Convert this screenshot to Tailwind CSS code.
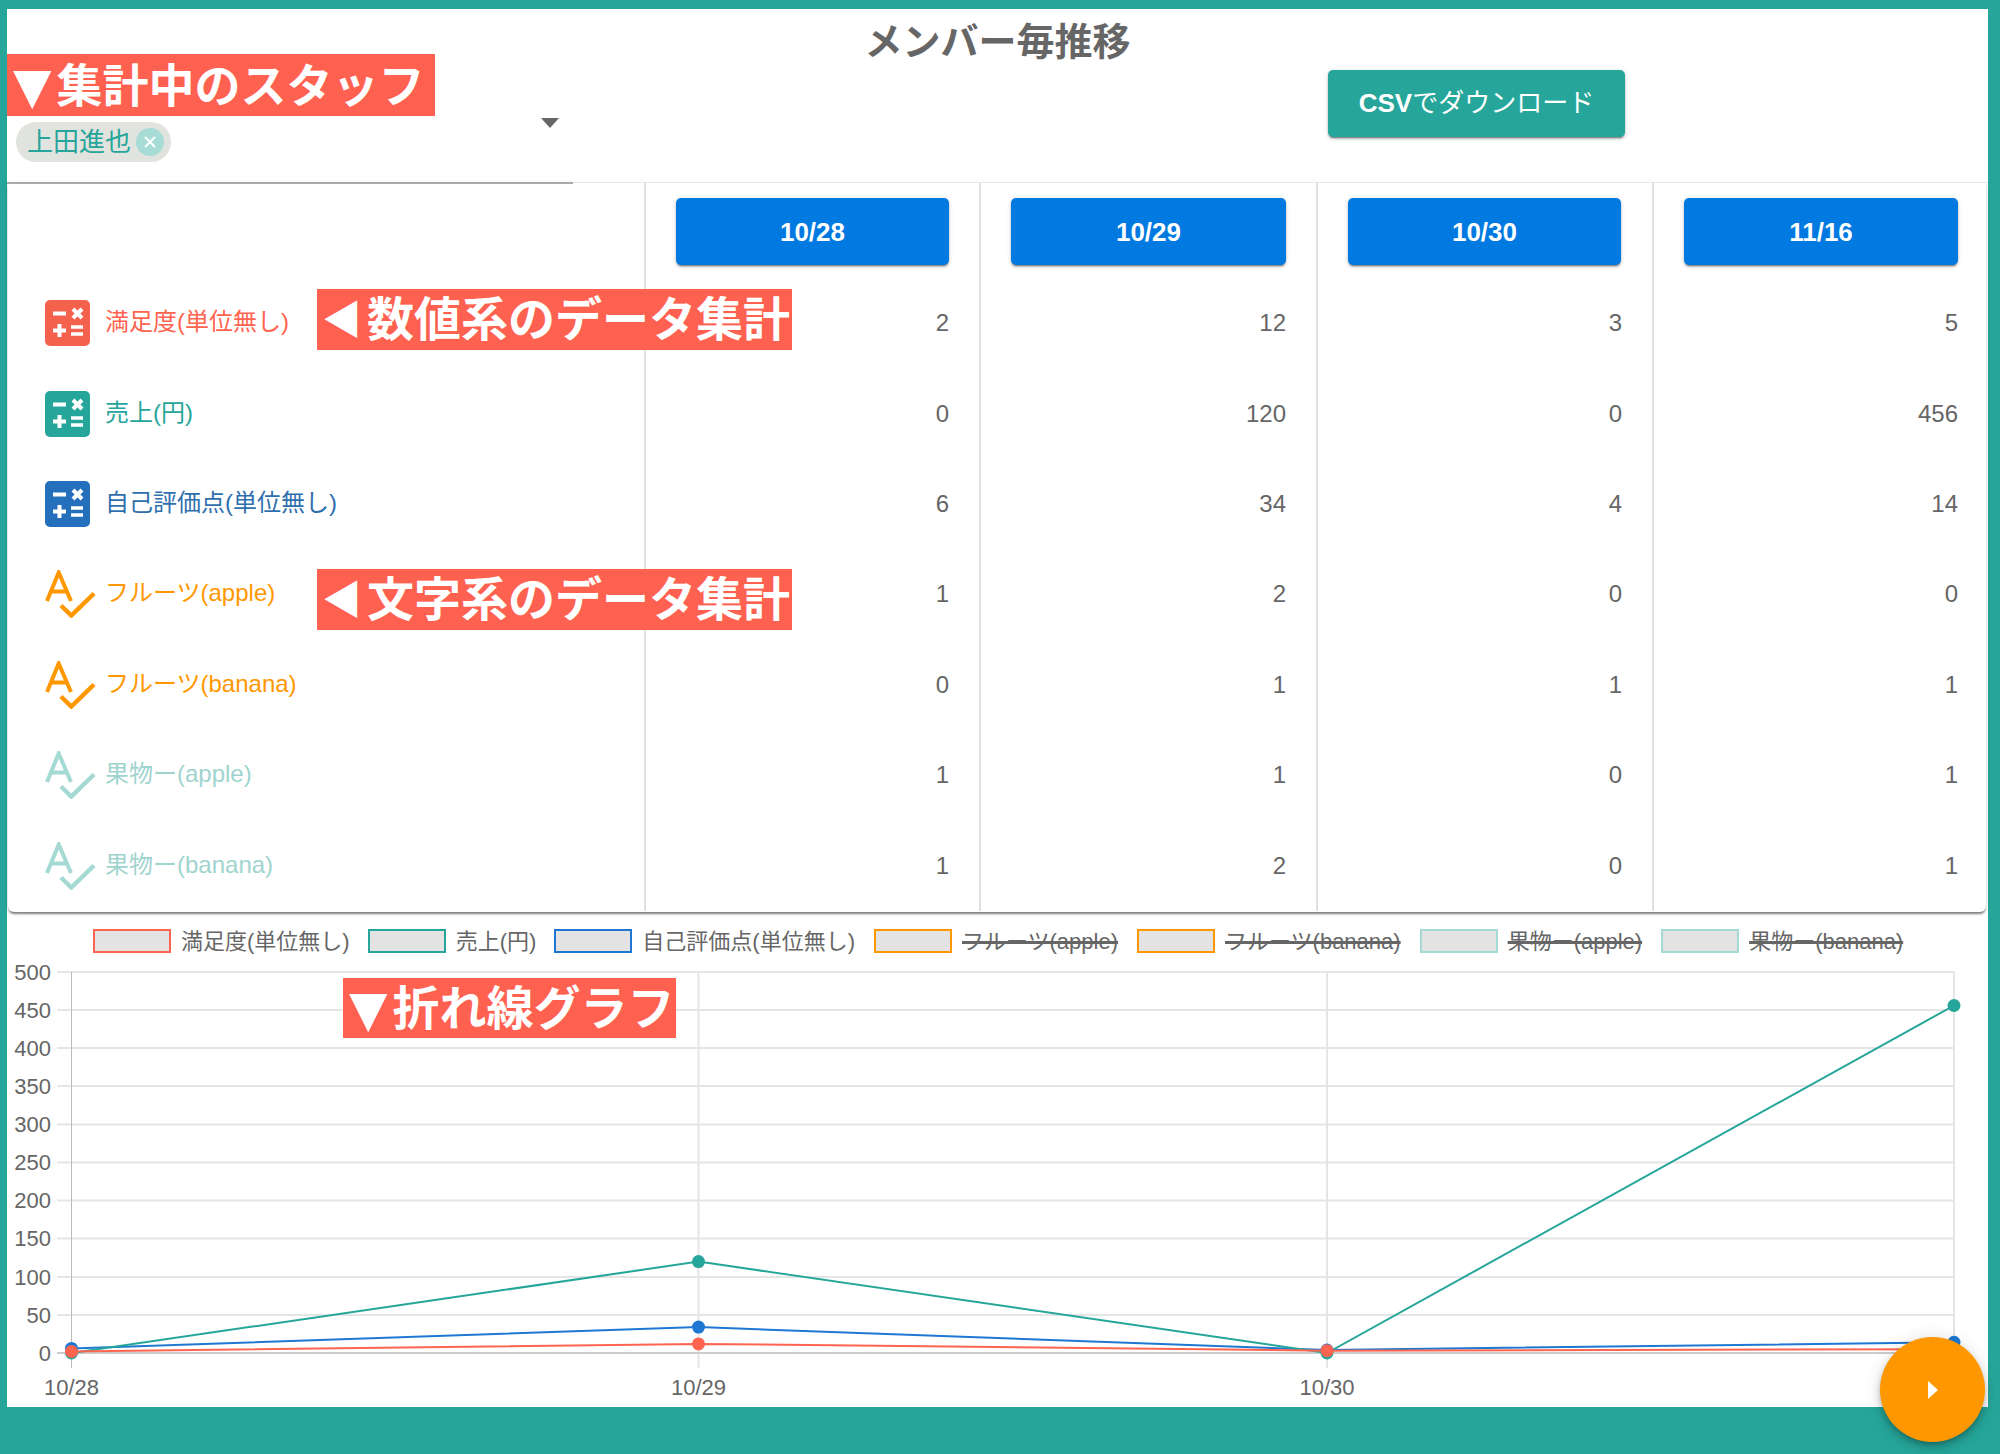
<!DOCTYPE html>
<html lang="ja">
  <head>
    <meta charset="utf-8" />
    <title>メンバー毎推移</title>
    <script src="https://cdn.jsdelivr.net/npm/@tailwindcss/browser@4"></script>
  </head>
  <body class="bg-[#26a69a] font-['Liberation_Sans','Noto_Sans_CJK_JP',sans-serif] text-[#666]">
    <div class="relative w-[2000px] h-[1454px] overflow-hidden pt-[9px] pl-[7px] pr-[12px]">
      <div class="bg-white h-[1398px]">
        <!-- header -->
        <header class="relative h-[174px]">
          <h1 class="absolute left-0 right-0 top-[10px] text-center text-[38px] leading-[46px] font-bold text-[#666]">メンバー毎推移</h1>
          <div class="absolute left-0 top-0 w-[566px] h-[175px] border-b-2 border-[#aaa]">
            <span class="absolute left-[9px] top-[113px] flex items-center h-[40px] w-[155px] pl-[11px] rounded-full bg-[#e1e3df] text-[26px] text-[#26a69a]">
              上田進也
              <svg class="ml-[5px]" width="28" height="28" viewBox="0 0 28 28">
                <circle cx="14" cy="14" r="14" fill="#a8dcd6" />
                <path d="M9 9l10 10M19 9L9 19" stroke="#fff" stroke-width="2" />
              </svg>
            </span>
            <svg class="absolute left-[534px] top-[109px]" width="18" height="10" viewBox="0 0 18 10"><path d="M0 0h18L9 10z" fill="#666" /></svg>
          </div>
          <div class="absolute left-[566px] right-0 bottom-0 border-b border-[#e8e8e8]"></div>
          <button class="absolute left-[1321px] top-[61px] w-[297px] h-[67px] rounded-[5px] bg-[#26a69a] text-white text-[26px] shadow-[0_3px_1px_-2px_rgba(0,0,0,0.3),0_2px_2px_0_rgba(0,0,0,0.2),0_1px_5px_0_rgba(0,0,0,0.15)]"><span class="font-bold">CSV</span>でダウンロード</button>
        </header>

        <!-- table -->
        <section class="grid grid-cols-[636px_335px_337px_336px_334px] grid-rows-[95px_repeat(7,90.4px)] w-[1978px] h-[729px] ml-[1px] -mr-[1px] rounded-b-[6px] text-[24px] shadow-[0_3px_2px_-1px_rgba(0,0,0,0.35),0_2px_2px_0_rgba(0,0,0,0.14),0_1px_5px_0_rgba(0,0,0,0.12)]">
          <div></div>
          <div class="border-l-2 border-[#e0e0e0] pl-[30px] pt-[15px]"><button class="w-[273px] h-[67px] pt-[1px] rounded-[5px] bg-[#0079e1] text-white text-[26px] font-bold shadow-[0_3px_1px_-2px_rgba(0,0,0,0.3),0_2px_2px_0_rgba(0,0,0,0.2),0_1px_5px_0_rgba(0,0,0,0.15)]">10/28</button></div>
          <div class="border-l-2 border-[#e0e0e0] pl-[30px] pt-[15px]"><button class="w-[275px] h-[67px] pt-[1px] rounded-[5px] bg-[#0079e1] text-white text-[26px] font-bold shadow-[0_3px_1px_-2px_rgba(0,0,0,0.3),0_2px_2px_0_rgba(0,0,0,0.2),0_1px_5px_0_rgba(0,0,0,0.15)]">10/29</button></div>
          <div class="border-l-2 border-[#e0e0e0] pl-[30px] pt-[15px]"><button class="w-[273px] h-[67px] pt-[1px] rounded-[5px] bg-[#0079e1] text-white text-[26px] font-bold shadow-[0_3px_1px_-2px_rgba(0,0,0,0.3),0_2px_2px_0_rgba(0,0,0,0.2),0_1px_5px_0_rgba(0,0,0,0.15)]">10/30</button></div>
          <div class="border-l-2 border-[#e0e0e0] pl-[30px] pt-[15px]"><button class="w-[274px] h-[67px] pt-[1px] rounded-[5px] bg-[#0079e1] text-white text-[26px] font-bold shadow-[0_3px_1px_-2px_rgba(0,0,0,0.3),0_2px_2px_0_rgba(0,0,0,0.2),0_1px_5px_0_rgba(0,0,0,0.15)]">11/16</button></div>

          <!-- numeric rows -->
          <div class="flex items-center pl-[37px] gap-[15px] text-[#ff6450]">
            <svg width="45" height="46" viewBox="0 0 45 46"><rect width="45" height="46" rx="5" fill="#f4614c" /><path d="M8 13.5h13M28 9l9 9M37 9l-9 9M14.5 24v13M8 30.5h13" stroke="#fff" stroke-width="4" /><path d="M26 27h12M26 34h12" stroke="#fff" stroke-width="3.5" /></svg>
            <span class="-mt-[2px]">満足度(単位無し)</span>
          </div>
          <div class="flex items-center justify-end pr-[30px] border-l-2 border-[#e0e0e0]">2</div>
          <div class="flex items-center justify-end pr-[30px] border-l-2 border-[#e0e0e0]">12</div>
          <div class="flex items-center justify-end pr-[30px] border-l-2 border-[#e0e0e0]">3</div>
          <div class="flex items-center justify-end pr-[28px] border-l-2 border-[#e0e0e0]">5</div>

          <div class="flex items-center pl-[37px] gap-[15px] text-[#26a69a]">
            <svg width="45" height="46" viewBox="0 0 45 46"><rect width="45" height="46" rx="5" fill="#26a69a" /><path d="M8 13.5h13M28 9l9 9M37 9l-9 9M14.5 24v13M8 30.5h13" stroke="#fff" stroke-width="4" /><path d="M26 27h12M26 34h12" stroke="#fff" stroke-width="3.5" /></svg>
            <span class="-mt-[2px]">売上(円)</span>
          </div>
          <div class="flex items-center justify-end pr-[30px] border-l-2 border-[#e0e0e0]">0</div>
          <div class="flex items-center justify-end pr-[30px] border-l-2 border-[#e0e0e0]">120</div>
          <div class="flex items-center justify-end pr-[30px] border-l-2 border-[#e0e0e0]">0</div>
          <div class="flex items-center justify-end pr-[28px] border-l-2 border-[#e0e0e0]">456</div>

          <div class="flex items-center pl-[37px] gap-[15px] text-[#2f6fae]">
            <svg width="45" height="46" viewBox="0 0 45 46"><rect width="45" height="46" rx="5" fill="#2470bd" /><path d="M8 13.5h13M28 9l9 9M37 9l-9 9M14.5 24v13M8 30.5h13" stroke="#fff" stroke-width="4" /><path d="M26 27h12M26 34h12" stroke="#fff" stroke-width="3.5" /></svg>
            <span class="-mt-[2px]">自己評価点(単位無し)</span>
          </div>
          <div class="flex items-center justify-end pr-[30px] border-l-2 border-[#e0e0e0]">6</div>
          <div class="flex items-center justify-end pr-[30px] border-l-2 border-[#e0e0e0]">34</div>
          <div class="flex items-center justify-end pr-[30px] border-l-2 border-[#e0e0e0]">4</div>
          <div class="flex items-center justify-end pr-[28px] border-l-2 border-[#e0e0e0]">14</div>

          <!-- text rows -->
          <div class="flex items-center pl-[36px] gap-[9px] text-[#ff9800]">
            <svg width="52" height="48" viewBox="0 0 52 48" fill="none" stroke="#ff9800"><path d="M3 31L14.7 2.5L27 31M7 21.5H23" stroke-width="4" /><path d="M17 35.5L27.3 45.5L50 23.5" stroke-width="4.5" /></svg>
            <span class="-mt-[2px]">フルーツ(apple)</span>
          </div>
          <div class="flex items-center justify-end pr-[30px] border-l-2 border-[#e0e0e0]">1</div>
          <div class="flex items-center justify-end pr-[30px] border-l-2 border-[#e0e0e0]">2</div>
          <div class="flex items-center justify-end pr-[30px] border-l-2 border-[#e0e0e0]">0</div>
          <div class="flex items-center justify-end pr-[28px] border-l-2 border-[#e0e0e0]">0</div>

          <div class="flex items-center pl-[36px] gap-[9px] text-[#ff9800]">
            <svg width="52" height="48" viewBox="0 0 52 48" fill="none" stroke="#ff9800"><path d="M3 31L14.7 2.5L27 31M7 21.5H23" stroke-width="4" /><path d="M17 35.5L27.3 45.5L50 23.5" stroke-width="4.5" /></svg>
            <span class="-mt-[2px]">フルーツ(banana)</span>
          </div>
          <div class="flex items-center justify-end pr-[30px] border-l-2 border-[#e0e0e0]">0</div>
          <div class="flex items-center justify-end pr-[30px] border-l-2 border-[#e0e0e0]">1</div>
          <div class="flex items-center justify-end pr-[30px] border-l-2 border-[#e0e0e0]">1</div>
          <div class="flex items-center justify-end pr-[28px] border-l-2 border-[#e0e0e0]">1</div>

          <div class="flex items-center pl-[36px] gap-[9px] text-[#9fd4ce]">
            <svg width="52" height="48" viewBox="0 0 52 48" fill="none" stroke="#a5dad4"><path d="M3 31L14.7 2.5L27 31M7 21.5H23" stroke-width="4" /><path d="M17 35.5L27.3 45.5L50 23.5" stroke-width="4.5" /></svg>
            <span class="-mt-[2px]">果物ー(apple)</span>
          </div>
          <div class="flex items-center justify-end pr-[30px] border-l-2 border-[#e0e0e0]">1</div>
          <div class="flex items-center justify-end pr-[30px] border-l-2 border-[#e0e0e0]">1</div>
          <div class="flex items-center justify-end pr-[30px] border-l-2 border-[#e0e0e0]">0</div>
          <div class="flex items-center justify-end pr-[28px] border-l-2 border-[#e0e0e0]">1</div>

          <div class="flex items-center pl-[36px] gap-[9px] text-[#9fd4ce]">
            <svg width="52" height="48" viewBox="0 0 52 48" fill="none" stroke="#a5dad4"><path d="M3 31L14.7 2.5L27 31M7 21.5H23" stroke-width="4" /><path d="M17 35.5L27.3 45.5L50 23.5" stroke-width="4.5" /></svg>
            <span class="-mt-[2px]">果物ー(banana)</span>
          </div>
          <div class="flex items-center justify-end pr-[30px] border-l-2 border-[#e0e0e0]">1</div>
          <div class="flex items-center justify-end pr-[30px] border-l-2 border-[#e0e0e0]">2</div>
          <div class="flex items-center justify-end pr-[30px] border-l-2 border-[#e0e0e0]">0</div>
          <div class="flex items-center justify-end pr-[28px] border-l-2 border-[#e0e0e0]">1</div>
        </section>

        <!-- legend -->
        <div class="flex items-center h-[48px] pt-[17px] pb-[7px] pl-[86px] text-[22px] text-[#666]">
          <span class="w-[78px] h-[24px] bg-[#e3e3e3] border-2 border-[#ff6450]"></span>
          <span class="ml-[10px] mr-[18px]">満足度(単位無し)</span>
          <span class="w-[78px] h-[24px] bg-[#e3e3e3] border-2 border-[#26a69a]"></span>
          <span class="ml-[10px] mr-[18px]">売上(円)</span>
          <span class="w-[78px] h-[24px] bg-[#e3e3e3] border-2 border-[#1e78d2]"></span>
          <span class="ml-[10px] mr-[19px]">自己評価点(単位無し)</span>
          <span class="w-[78px] h-[24px] bg-[#e3e3e3] border-2 border-[#ff9800]"></span>
          <span class="ml-[10px] mr-[19px] line-through decoration-[3px]">フルーツ(apple)</span>
          <span class="w-[78px] h-[24px] bg-[#e3e3e3] border-2 border-[#ff9800]"></span>
          <span class="ml-[10px] mr-[19px] line-through decoration-[3px]">フルーツ(banana)</span>
          <span class="w-[78px] h-[24px] bg-[#e3e3e3] border-2 border-[#a5dad4]"></span>
          <span class="ml-[10px] mr-[19px] line-through decoration-[3px]">果物ー(apple)</span>
          <span class="w-[78px] h-[24px] bg-[#e3e3e3] border-2 border-[#a5dad4]"></span>
          <span class="ml-[10px] line-through decoration-[3px]">果物ー(banana)</span>
        </div>

        <!-- line chart, viewBox is in page pixels -->
        <svg class="block" width="1981" height="447" viewBox="7 960 1981 447" fill="#666" font-size="22">
          <g stroke="#e5e5e5" stroke-width="2">
            <path d="M57 972H1954M57 1010H1954M57 1048H1954M57 1086H1954M57 1124.5H1954M57 1162.5H1954M57 1200.5H1954M57 1238.5H1954M57 1277H1954M57 1315H1954" />
            <path d="M698.5 972V1368M1327 972V1368M1954 972V1353" />
          </g>
          <path d="M57 1353H1954" stroke="#ccc" stroke-width="2" />
          <path d="M71.5 972V1368" stroke="#bbb" stroke-width="1" />
          <g text-anchor="end">
            <text x="51" y="980">500</text><text x="51" y="1018">450</text><text x="51" y="1056">400</text><text x="51" y="1094">350</text><text x="51" y="1132">300</text><text x="51" y="1170">250</text><text x="51" y="1208">200</text><text x="51" y="1246">150</text><text x="51" y="1285">100</text><text x="51" y="1323">50</text><text x="51" y="1361">0</text>
          </g>
          <g text-anchor="middle">
            <text x="71.5" y="1395">10/28</text><text x="698.5" y="1395">10/29</text><text x="1327" y="1395">10/30</text>
          </g>
          <g fill="none" stroke-width="2">
            <polyline stroke="#1e78d2" points="71.5,1348.4 698.5,1327.1 1327,1350 1954,1342.3" />
            <polyline stroke="#26a69a" points="71.5,1353 698.5,1261.6 1327,1353 1954,1005.5" />
            <polyline stroke="#ff6450" points="71.5,1351.5 698.5,1343.9 1327,1350.7 1954,1349.2" />
          </g>
          <g fill="#1e78d2"><circle cx="71.5" cy="1348.4" r="6.5" /><circle cx="698.5" cy="1327.1" r="6.5" /><circle cx="1327" cy="1350" r="6.5" /><circle cx="1954" cy="1342.3" r="6.5" /></g>
          <g fill="#26a69a"><circle cx="71.5" cy="1353" r="6.5" /><circle cx="698.5" cy="1261.6" r="6.5" /><circle cx="1327" cy="1353" r="6.5" /><circle cx="1954" cy="1005.5" r="6.5" /></g>
          <g fill="#ff6450"><circle cx="71.5" cy="1351.5" r="6.5" /><circle cx="698.5" cy="1343.9" r="6.5" /><circle cx="1327" cy="1350.7" r="6.5" /><circle cx="1954" cy="1349.2" r="6.5" /></g>
        </svg>
      </div>

      <!-- annotations on top of the screen -->
      <div class="absolute left-[7px] top-[54px] w-[428px] h-[62px] overflow-hidden flex items-center bg-[#ff6150] text-white font-bold text-[46px] leading-[60px] whitespace-nowrap pt-[2px] pl-[6px]"><span class="mr-[5px] shrink-0 font-['DejaVu_Sans'] font-normal text-[50px] leading-[60px]">▼</span>集計中のスタッフ</div>
      <div class="absolute left-[317px] top-[289px] w-[475px] h-[61px] overflow-hidden flex items-center bg-[#ff6150] text-white font-bold text-[47px] leading-[60px] whitespace-nowrap pt-[1px]"><span class="w-[50px] shrink-0 text-center text-[40px] leading-[60px]">◀</span>数値系のデータ集計</div>
      <div class="absolute left-[317px] top-[569px] w-[475px] h-[61px] overflow-hidden flex items-center bg-[#ff6150] text-white font-bold text-[47px] leading-[60px] whitespace-nowrap pt-[1px]"><span class="w-[50px] shrink-0 text-center text-[40px] leading-[60px]">◀</span>文字系のデータ集計</div>
      <div class="absolute left-[343px] top-[978px] w-[333px] h-[60px] overflow-hidden flex items-center bg-[#ff6150] text-white font-bold text-[47px] leading-[60px] whitespace-nowrap pt-[1px] pl-[6px]"><span class="mr-[5px] shrink-0 font-['DejaVu_Sans'] font-normal text-[50px] leading-[60px]">▼</span>折れ線グラフ</div>

      <!-- floating button -->
      <button class="absolute left-[1880px] top-[1337px] w-[105px] h-[105px] rounded-full bg-[#ff9800] flex items-center justify-center shadow-[0_3px_5px_-1px_rgba(0,0,0,0.2),0_6px_10px_0_rgba(0,0,0,0.14),0_1px_18px_0_rgba(0,0,0,0.12)]">
        <svg width="10" height="18" viewBox="0 0 10 18"><path d="M0 0l10 9L0 18z" fill="#fff" /></svg>
      </button>
    </div>
  </body>
</html>
